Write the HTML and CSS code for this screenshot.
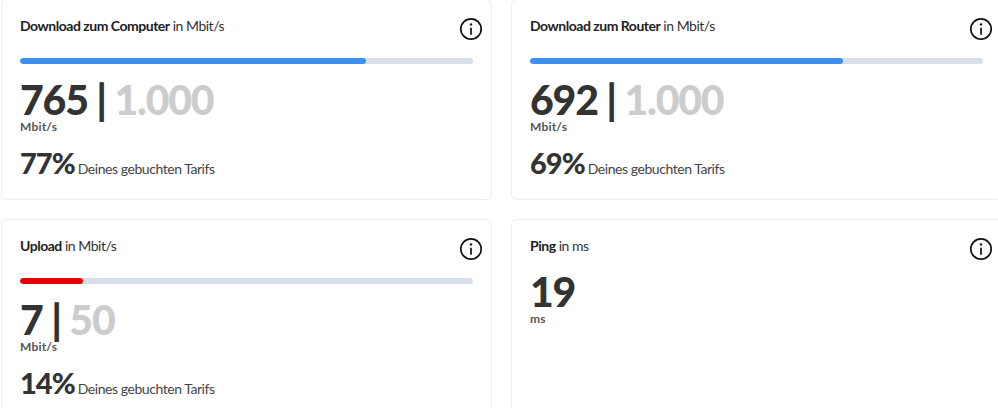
FILE: index.html
```html
<!DOCTYPE html>
<html lang="de">
<head>
<meta charset="utf-8">
<title>Speedtest</title>
<link rel="stylesheet" href="styles.css">
</head>
<body>
<main class="grid">
  <section class="card">
    <header class="head"><h2 class="title"><b>Download zum Computer</b> in Mbit/s</h2>
      <svg class="info" viewBox="0 0 24 24"><circle cx="12" cy="12" r="10.2"/><circle class="dot" cx="12" cy="7.4" r="1.2"/><path d="M12 10.8v7"/></svg></header>
    <div class="track"><div class="fill blue" style="width:76.4%"></div></div>
    <div class="big">765 <span class="sep">|</span> <span class="max">1.000</span></div>
    <div class="unit">Mbit/s</div>
    <div class="pct"><strong>77%</strong> Deines gebuchten Tarifs</div>
  </section>
  <section class="card">
    <header class="head"><h2 class="title"><b>Download zum Router</b> in Mbit/s</h2>
      <svg class="info" viewBox="0 0 24 24"><circle cx="12" cy="12" r="10.2"/><circle class="dot" cx="12" cy="7.4" r="1.2"/><path d="M12 10.8v7"/></svg></header>
    <div class="track"><div class="fill blue" style="width:69.2%"></div></div>
    <div class="big">692 <span class="sep">|</span> <span class="max">1.000</span></div>
    <div class="unit">Mbit/s</div>
    <div class="pct"><strong>69%</strong> Deines gebuchten Tarifs</div>
  </section>
  <section class="card">
    <header class="head"><h2 class="title"><b>Upload</b> in Mbit/s</h2>
      <svg class="info" viewBox="0 0 24 24"><circle cx="12" cy="12" r="10.2"/><circle class="dot" cx="12" cy="7.4" r="1.2"/><path d="M12 10.8v7"/></svg></header>
    <div class="track"><div class="fill red" style="width:14%"></div></div>
    <div class="big">7 <span class="sep">|</span> <span class="max">50</span></div>
    <div class="unit">Mbit/s</div>
    <div class="pct"><strong>14%</strong> Deines gebuchten Tarifs</div>
  </section>
  <section class="card">
    <header class="head short"><h2 class="title"><b>Ping</b> in ms</h2>
      <svg class="info" viewBox="0 0 24 24"><circle cx="12" cy="12" r="10.2"/><circle class="dot" cx="12" cy="7.4" r="1.2"/><path d="M12 10.8v7"/></svg></header>
    <div class="big">19</div>
    <div class="unit">ms</div>
  </section>
</main>
</body>
</html>
```
FILE: styles.css
```css
html, body {
  margin: 0;
  height: 408px;
  overflow: hidden;
  background: #fff;
}
body {
  font-family: "Lato", "Open Sans", sans-serif;
  color: #333;
}
.grid {
  display: grid;
  grid-template-columns: 491px 491px;
  grid-auto-rows: 201px;
  gap: 19px;
  width: 1001px;
  margin: -1px 0 0 1px;
}
.card {
  box-sizing: border-box;
  border: 1px solid #ebedf3;
  border-radius: 6px;
  background: #fff;
  padding: 17px 8px 0 18px;
}
.head {
  display: flex;
  justify-content: space-between;
  align-items: flex-start;
  height: 41px;
}
.head.short { height: 19px; }
.title {
  margin: 0;
  font-size: 14px;
  line-height: 18px;
  font-weight: 400;
  color: #333;
  letter-spacing: -0.48px;
}
.title b { font-weight: 700; color: #222; }
.info {
  width: 24px;
  height: 24px;
  flex: none;
  fill: none;
  stroke: #111;
  stroke-width: 1.7;
}
.info .dot { fill: #111; stroke: none; }
.track {
  height: 6px;
  width: 453px;
  border-radius: 3px;
  background: #d9dfea;
  overflow: hidden;
}
.fill { height: 100%; border-radius: 3px; }
.blue { background: #3d8ff0; }
.red { background: #e60000; }
.big {
  margin-top: 16px;
  font-size: 41px;
  line-height: 40px;
  font-weight: 900;
  letter-spacing: -1.2px;
  color: #333;
}
.sep { font-weight: 900; }
.max { color: #ccc; }
.unit {
  font-size: 12px;
  line-height: 14px;
  font-weight: 700;
  letter-spacing: 0.2px;
  color: #555;
}
.pct {
  margin-top: 12px;
  font-size: 14px;
  line-height: 34px;
  letter-spacing: -0.45px;
  color: #444;
}
.pct strong {
  font-size: 29px;
  font-weight: 900;
  color: #333;
  letter-spacing: -1px;
}
```
